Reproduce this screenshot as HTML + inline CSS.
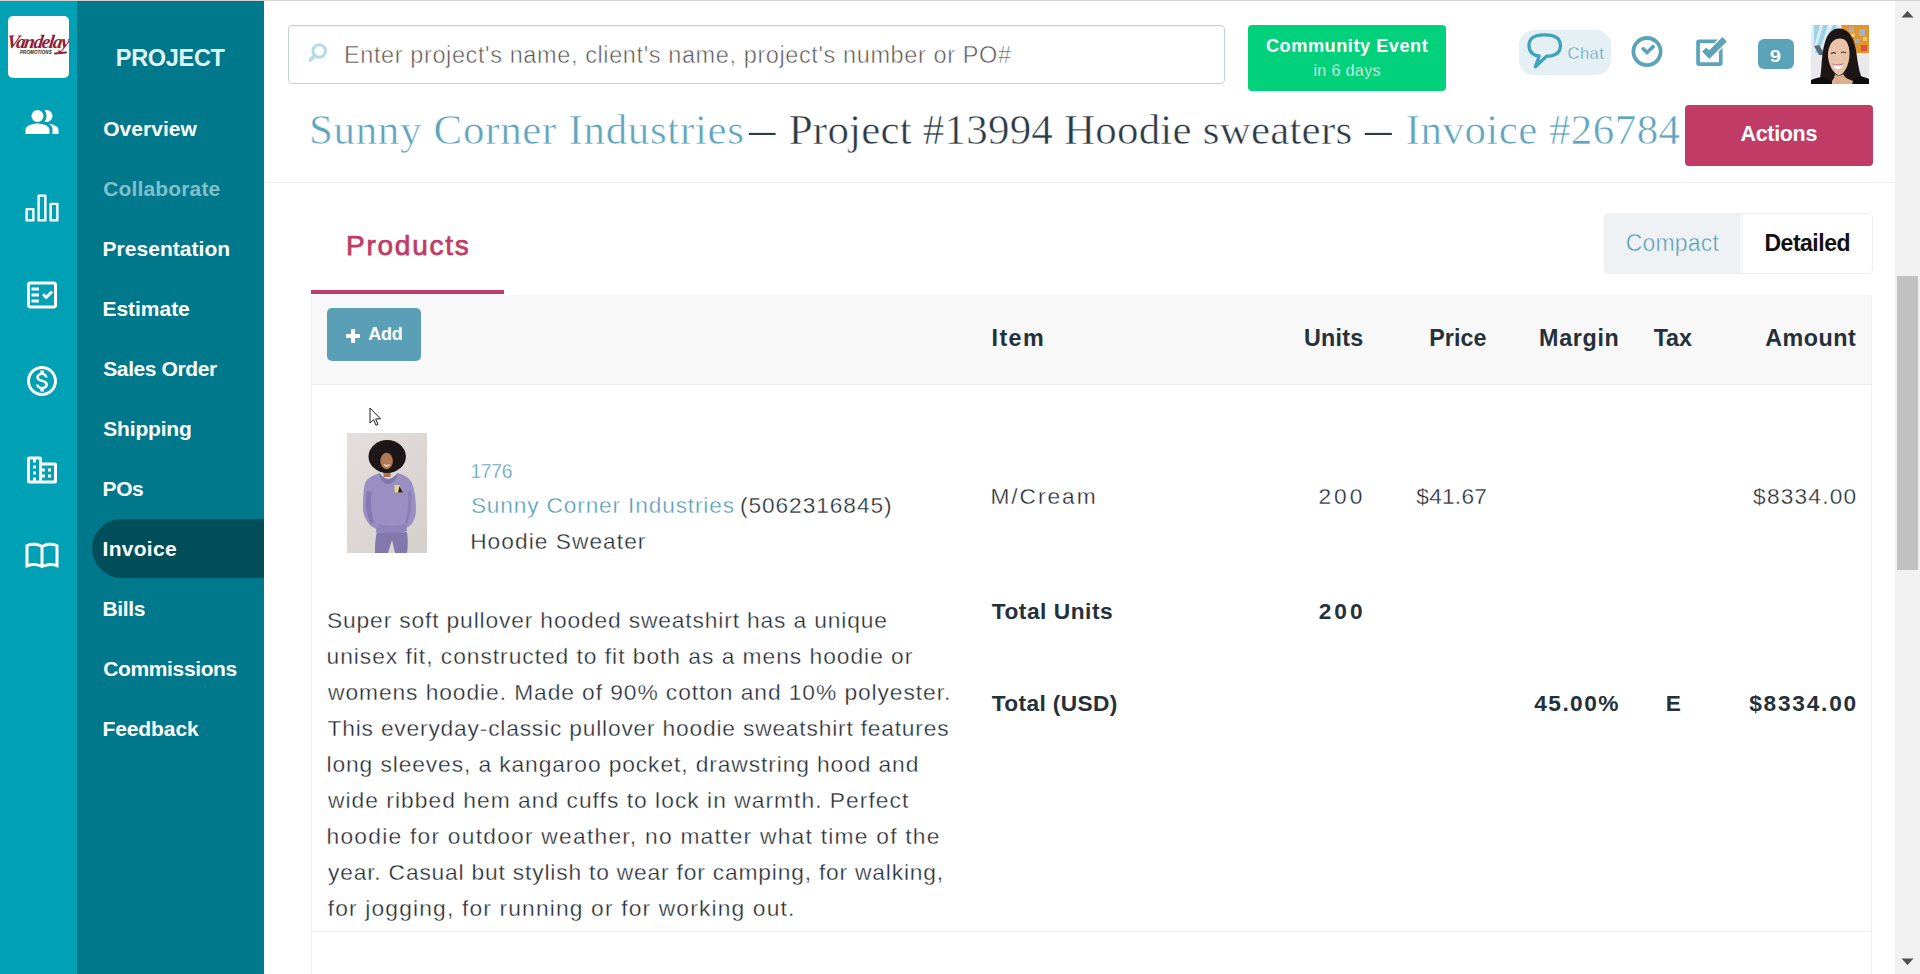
<!DOCTYPE html>
<html lang="en">
<head>
<meta charset="utf-8">
<title>Invoice #26784 - Project #13994 Hoodie sweaters</title>
<style>
*{box-sizing:border-box;margin:0;padding:0}
html,body{width:1920px;height:974px;overflow:hidden;background:#fff;font-family:"Liberation Sans",sans-serif;color:#24313b}
body{position:relative}
.abs{position:absolute}
.t{position:absolute;white-space:nowrap;text-decoration:none;display:block}
#topline{left:0;top:0;width:1920px;height:1px;background:#d6d2d2;z-index:50}
#iconbar{left:0;top:0;width:77px;height:974px;background:#00a0b5}
#side{left:77px;top:0;width:187px;height:974px;background:#00788b}
#logo{left:8px;top:16px;width:61px;height:62px;background:#fff;border-radius:5px;overflow:hidden}
.active{left:92px;top:519px;width:172px;height:59px;background:#004e5a;border-radius:30px 0 0 30px}
.ico{position:absolute;width:36px;height:36px;fill:#fff}
#search{left:288px;top:25px;width:937px;height:59px;border:1px solid #c5d1da;border-radius:4px;background:#fff;box-shadow:inset 0 1px 2px rgba(0,0,0,.06)}
#event{left:1248px;top:25px;width:198px;height:66px;background:#00d17a;border-radius:4px}
#chat{left:1519px;top:30px;width:92px;height:45px;background:#e5f0f5;border-radius:15px}
#badge{left:1758px;top:39px;width:36px;height:30px;background:#5ba3b9;border-radius:6px}
#hr{left:264px;top:182px;width:1631px;height:1px;background:#ebeef0}
#actions{left:1685px;top:105px;width:188px;height:61px;background:#c03b66;border-radius:4px}
#tabline{left:311px;top:290px;width:193px;height:4px;background:#c03b66}
#toggle{left:1604px;top:213px;width:269px;height:61px;border:1px solid #eceef0;border-radius:5px;background:#fff}
#compact{left:1604px;top:213px;width:137px;height:61px;background:#eef2f5;border-radius:5px 0 0 5px}
#thead{left:311px;top:295px;width:1561px;height:90px;background:#f8f8f8;border-bottom:1px solid #e9ecee;border-left:1px solid #eef0f1;border-right:1px solid #eef0f1}
#tbody{left:311px;top:385px;width:1561px;height:547px;border-left:1px solid #eef0f1;border-right:1px solid #eef0f1;border-bottom:1px solid #eceeef}
#tbody2{left:311px;top:932px;width:1561px;height:42px;border-left:1px solid #eef0f1;border-right:1px solid #eef0f1}
#add{left:327px;top:308px;width:94px;height:53px;background:#5a9fb5;border-radius:5px}
#sbtrack{left:1895px;top:0;width:25px;height:974px;background:#f1f1f1}
#sbthumb{left:1897px;top:276px;width:21px;height:294px;background:#c1c1c1}
</style>
</head>
<body>
<div id="iconbar" class="abs"></div>
<div id="side" class="abs"></div>
<div class="abs active"></div>
<span class="t" style="left:115.80px;top:47.11px;font-size:23.5px;line-height:23.5px;letter-spacing:-0.308px;color:#e0f5fa;font-weight:bold;">PROJECT</span>
<a class="t" style="left:103.25px;top:118.22px;font-size:21px;line-height:21px;letter-spacing:0.036px;color:#fff;font-weight:bold;">Overview</a>
<a class="t" style="left:103.25px;top:178.22px;font-size:21px;line-height:21px;letter-spacing:0.150px;color:#80c0cc;font-weight:bold;">Collaborate</a>
<a class="t" style="left:102.50px;top:238.22px;font-size:21px;line-height:21px;letter-spacing:0.045px;color:#fff;font-weight:bold;">Presentation</a>
<a class="t" style="left:102.50px;top:298.22px;font-size:21px;line-height:21px;letter-spacing:-0.036px;color:#fff;font-weight:bold;">Estimate</a>
<a class="t" style="left:103.25px;top:358.22px;font-size:21px;line-height:21px;letter-spacing:-0.400px;color:#fff;font-weight:bold;">Sales Order</a>
<a class="t" style="left:103.25px;top:418.22px;font-size:21px;line-height:21px;letter-spacing:-0.179px;color:#fff;font-weight:bold;">Shipping</a>
<a class="t" style="left:102.50px;top:478.22px;font-size:21px;line-height:21px;letter-spacing:-0.375px;color:#fff;font-weight:bold;">POs</a>
<a class="t" style="left:102.50px;top:538.22px;font-size:21px;line-height:21px;letter-spacing:0.292px;color:#fff;font-weight:bold;">Invoice</a>
<a class="t" style="left:102.50px;top:598.22px;font-size:21px;line-height:21px;letter-spacing:-0.375px;color:#fff;font-weight:bold;">Bills</a>
<a class="t" style="left:103.25px;top:658.22px;font-size:21px;line-height:21px;letter-spacing:-0.370px;color:#fff;font-weight:bold;">Commissions</a>
<a class="t" style="left:102.50px;top:718.22px;font-size:21px;line-height:21px;letter-spacing:-0.107px;color:#fff;font-weight:bold;">Feedback</a>

<div id="logo" class="abs">
  <span class="abs" style="left:-1px;top:15.500px;width:61px;text-align:center;font-family:'Liberation Serif',serif;font-style:italic;font-weight:bold;font-size:19px;line-height:20px;letter-spacing:-1.3px;color:#8e2135;transform:skewX(-8deg)">Vandelay</span>
  <span class="abs" style="left:12px;top:34.300px;font-style:italic;font-weight:bold;font-size:4.5px;line-height:5px;letter-spacing:0.1px;color:#1a1a1a;white-space:nowrap">PROMOTIONS</span>
  <span class="abs" style="left:46px;top:35.500px;width:13px;height:2.2px;background:#8e2135;border-radius:2px;transform:rotate(-6deg)"></span>
</div>

<!-- icon bar icons -->
<svg class="ico" style="left:24px;top:104px" viewBox="0 0 24 24"><path d="M16.67 13.13C18.04 14.06 19 15.32 19 17v3h4v-3c0-2.18-3.57-3.47-6.33-3.87z"/><circle cx="9" cy="8" r="4"/><path d="M15 12c2.21 0 4-1.79 4-4s-1.79-4-4-4c-.47 0-.91.1-1.33.24C14.5 5.27 15 6.58 15 8s-.5 2.73-1.33 3.76c.42.14.86.24 1.33.24zM9 13c-2.67 0-8 1.34-8 4v3h16v-3c0-2.66-5.33-4-8-4z"/></svg>
<svg class="ico" style="left:24px;top:190px;fill:none;stroke:#fff;stroke-width:1.6;stroke-linejoin:round" viewBox="0 0 24 24"><rect x="1.75" y="12.75" width="4.5" height="7.5"/><rect x="9.75" y="3.75" width="4.5" height="16.5"/><rect x="17.75" y="9.25" width="4.5" height="11"/></svg>
<svg class="ico" style="left:24px;top:277px" viewBox="0 0 24 24"><path d="M20 3H4c-1.1 0-2 .9-2 2v14c0 1.1.9 2 2 2h16c1.1 0 2-.9 2-2V5c0-1.1-.9-2-2-2zm0 16H4V5h16v14z"/><path d="M19.41 10.42 17.99 9l-3.17 3.17-1.41-1.42L12 12.16 14.82 15z"/><path d="M5 7h5v2H5zM5 11h5v2H5zM5 15h5v2H5z"/></svg>
<svg class="ico" style="left:24px;top:363px" viewBox="0 0 24 24"><path d="M12 2C6.48 2 2 6.48 2 12s4.48 10 10 10 10-4.48 10-10S17.52 2 12 2zm0 18c-4.41 0-8-3.59-8-8s3.59-8 8-8 8 3.59 8 8-3.59 8-8 8zm.31-8.86c-1.77-.45-2.34-.94-2.34-1.67 0-.84.79-1.43 2.1-1.43 1.38 0 1.9.66 1.94 1.64h1.71c-.05-1.34-.87-2.57-2.49-2.97V5H10.9v1.69c-1.51.32-2.72 1.3-2.72 2.81 0 1.79 1.49 2.69 3.66 3.21 1.95.46 2.34 1.15 2.34 1.87 0 .53-.39 1.39-2.1 1.39-1.6 0-2.23-.72-2.32-1.64H8.04c.1 1.7 1.36 2.66 2.86 2.97V19h2.34v-1.67c1.52-.29 2.72-1.16 2.73-2.77-.01-2.2-1.9-2.96-3.66-3.42z"/></svg>
<svg class="ico" style="left:24px;top:451.500px" viewBox="0 0 24 24"><path fill-rule="evenodd" d="M3.500 3h7A1.500 1.500 0 0 1 12 4.500V7h8.500A1.500 1.500 0 0 1 22 8.500v11a1.500 1.500 0 0 1-1.500 1.500h-17A1.500 1.500 0 0 1 2 19.500v-15A1.500 1.500 0 0 1 3.500 3zM4 5v14h6V5zM12 9v10h8V9zM6 5h2v2H6zM6 9h2v2H6zM6 13h2v2H6zM6 17h2v2H6zM12 11h2v2h-2zM12 15h2v2h-2zM16 11h2v2h-2zM16 15h2v2h-2z"/></svg>
<svg class="ico" style="left:24px;top:536px" viewBox="0 0 24 24"><path d="M21 5c-1.11-.35-2.33-.5-3.5-.5-1.95 0-4.050.4-5.500 1.500-1.450-1.100-3.550-1.500-5.500-1.500S2.450 4.900 1 6v14.650c0 .25.250.5.5.5.100 0 .150-.050.250-.050C3.100 20.450 5.050 20 6.500 20c1.950 0 4.050.4 5.500 1.500 1.350-.85 3.800-1.500 5.500-1.500 1.650 0 3.350.3 4.750 1.050.1.050.150.050.250.050.250 0 .5-.250.5-.5V6c-.6-.45-1.250-.75-2-1zM3 18.500V7c1.100-.35 2.300-.5 3.500-.5 1.340 0 3.130.41 4.500.99v11.500C9.630 18.410 7.840 18 6.500 18c-1.200 0-2.400.15-3.500.5zm18 0c-1.100-.35-2.300-.5-3.500-.5-1.340 0-3.130.41-4.500.99V7.490c1.370-.59 3.160-.99 4.500-.99 1.200 0 2.400.15 3.500.5v11.500z"/></svg>

<!-- top bar -->
<div id="search" class="abs"></div>
<svg class="abs" style="left:306px;top:42px" width="22" height="22" viewBox="0 0 22 22" fill="none" stroke="#b3dbe9" stroke-linecap="round"><circle cx="13.200" cy="9" r="6.300" stroke-width="3"/><path d="M8.800 13.500 4.300 18" stroke-width="3.800"/></svg>
<div id="event" class="abs"></div>
<div id="chat" class="abs"></div>
<svg class="abs" style="left:1522px;top:30px" width="46" height="42" viewBox="0 0 46 42" fill="none" stroke="#3fa3b9" stroke-width="3.3" stroke-linejoin="round" stroke-linecap="round"><path d="M17.200 26C12.500 26 7 22.800 7 15.500C7 8.200 12 4.800 22.700 4.800C33.400 4.800 38.400 8.200 38.400 15.500C38.400 22.800 33.400 26.200 24.500 26.200L13.400 36.700z"/></svg>
<svg class="abs" style="left:1629px;top:34px" width="36" height="36" viewBox="0 0 36 36" fill="none" stroke="#5ba3b9"><circle cx="18" cy="17.600" r="13.600" stroke-width="3.800"/><path d="M13.200 13.700 18 18.500 25.200 11.700" stroke-width="3.700"/></svg>
<svg class="abs" style="left:1692px;top:34px" width="40" height="36" viewBox="0 0 40 36"><rect x="6.050" y="7.450" width="22.700" height="22.600" rx="0.900" fill="none" stroke="#5ba3b9" stroke-width="3.700"/><path d="M10.100 17.500 14.200 13.800 17.300 16.300 30.400 3.100 34.700 7.400 17.300 24.900z" fill="#5ba3b9" stroke="#fff" stroke-width="3" paint-order="stroke"/></svg>
<div id="badge" class="abs"></div>
<!-- avatar -->
<svg class="abs" style="left:1811px;top:25px" width="58" height="59" viewBox="0 0 58 59">
  <defs><filter id="abl" x="-10%" y="-10%" width="120%" height="120%"><feGaussianBlur stdDeviation="0.7"/></filter>
  <clipPath id="acl"><rect width="58" height="59"/></clipPath></defs>
  <g clip-path="url(#acl)">
  <rect width="58" height="59" fill="#e9e9eb"/>
  <g filter="url(#abl)">
  <rect x="-2" y="-2" width="34" height="33" fill="#dfeef5"/>
  <path d="M3 0l6 0-6 22zM12 0h5l-9 28H4zM22 0h4L14 30h-5z" fill="#9fd0e6"/>
  <path d="M3 21l5-1 6 10H8z" fill="#5d6b75"/>
  <path d="M30 -2h30v30H34z" fill="#e0952f"/>
  <path d="M38 2h5v5h-5zM48 4h6v7h-6zM44 14h5v4h-5z" fill="#9fb3c8"/>
  <path d="M50 20h6v6h-6z" fill="#e2503a"/>
  <path d="M40 8h4v4h-4zM52 12h4v4h-4z" fill="#efc46a"/>
  <path d="M27 3.500c-6 .5-10 5-12.500 12C12 23 11 32 10.500 40 10 48 9 54 8 60h46c-1.500-4-4-8-5.500-14C46.500 38 46 30 44.500 23 43 14 38 3 27 3.500z" fill="#1b1214"/>
  <path d="M21 17c4-4 9-4.500 13-2 3 2.500 4.500 8 4.500 14 0 8-3 16-7.500 20-2 1.500-4 1.500-6 0-4-3.500-7.500-10-8-18-.3-5 1-10 4-14z" fill="#e9c2aa"/>
  <path d="M24 49c2 2 6 2 8 0l3 4 7 3v4H21v-4l2-3z" fill="#dcae8f"/>
  <path d="M21.500 39c3 1.800 7.500 1.800 11-0.300-1 3.500-3.300 5.300-5.800 5.300s-4.200-1.800-5.200-5z" fill="#fff"/>
  <path d="M21 38.500c3.500 1.500 8 1.300 11.800-.5l-.5 1.200c-3.300 1.500-7.500 1.700-10.800.3z" fill="#d9607a"/>
  <path d="M20 28.500c1.500-1 3.500-1 4.800 0M30 28c1.500-1.200 3.500-1.200 5 0" stroke="#4a3530" stroke-width="1.200" fill="none"/>
  <path d="M0 60v-5c3-1.500 7-2.500 11-3l9 4 1 4zM58 60v-6c-3-1.500-6-2.500-10-3l-6 5-1 4z" fill="#0c0c0e"/>
  </g></g>
</svg>

<span class="t" style="left:344.00px;top:43.81px;font-size:23.5px;line-height:23.5px;letter-spacing:0.606px;color:#5a5654;-webkit-text-stroke:0.5px #fff;">Enter project's name, client's name, project's number or PO#</span>
<span class="t" style="left:1265.95px;top:37.29px;font-size:18.2px;line-height:18.2px;letter-spacing:0.518px;color:#fff;font-weight:bold;">Community Event</span>
<span class="t" style="left:1313.40px;top:61.80px;font-size:16.3px;line-height:16.3px;letter-spacing:0.269px;color:#fff;-webkit-text-stroke:0.35px #00d17a;">in 6 days</span>
<span class="t" style="left:1567.55px;top:44.78px;font-size:16.5px;line-height:16.5px;letter-spacing:0.483px;color:#4f9db8;-webkit-text-stroke:0.4px #e5f0f5;">Chat</span>
<span class="t" style="left:1770.10px;top:47.90px;font-size:16.3px;line-height:16.3px;letter-spacing:0.000px;color:#fff;font-weight:bold;transform:scaleX(1.275);transform-origin:0.50px 50%;">9</span>

<!-- page header -->
<div id="hr" class="abs"></div>
<div id="actions" class="abs"></div>
<a class="t" style="left:308.95px;top:108.49px;font-size:43px;line-height:43px;letter-spacing:0.670px;color:#5fa5be;font-family:'Liberation Serif',serif;-webkit-text-stroke:0.55px #fff;">Sunny Corner Industries</a>
<span class="t" style="left:748.55px;top:108.49px;font-size:43px;line-height:43px;letter-spacing:0.000px;color:#2b3a45;font-family:'Liberation Serif',serif;transform:scaleX(0.614);transform-origin:-0.25px 50%;">—</span>
<span class="t" style="left:788.75px;top:108.49px;font-size:43px;line-height:43px;letter-spacing:0.197px;color:#2b3a45;font-family:'Liberation Serif',serif;-webkit-text-stroke:0.55px #fff;">Project #13994 Hoodie sweaters</span>
<span class="t" style="left:1365.25px;top:108.49px;font-size:43px;line-height:43px;letter-spacing:0.000px;color:#2b3a45;font-family:'Liberation Serif',serif;transform:scaleX(0.621);transform-origin:-0.25px 50%;">—</span>
<a class="t" style="left:1405.80px;top:108.49px;font-size:43px;line-height:43px;letter-spacing:0.431px;color:#5fa5be;font-family:'Liberation Serif',serif;-webkit-text-stroke:0.55px #fff;">Invoice #26784</a>
<span class="t" style="left:1740.50px;top:123.50px;font-size:21.5px;line-height:21.5px;letter-spacing:-0.333px;color:#fff;font-weight:bold;">Actions</span>

<!-- tabs -->
<div id="tabline" class="abs"></div>
<div id="toggle" class="abs"></div>
<div id="compact" class="abs"></div>
<div class="abs" style="left:1742px;top:214px;width:1px;height:59px;background:#eceef0"></div>

<!-- table -->
<div id="thead" class="abs"></div>
<div id="tbody" class="abs"></div>
<div id="tbody2" class="abs"></div>
<div id="add" class="abs"></div>
<svg class="abs" style="left:346px;top:328.500px" width="14" height="14" viewBox="0 0 14 14"><path d="M5 0h4v5h5v4H9v5H5V9H0V5h5z" fill="#fff"/></svg>

<!-- product image -->
<svg class="abs" style="left:347px;top:433px" width="80" height="120" viewBox="0 0 80 120">
  <defs><linearGradient id="pbg" x1="0" y1="0" x2="1" y2="1"><stop offset="0" stop-color="#e4dfdc"/><stop offset="1" stop-color="#d6d0cd"/></linearGradient>
  <filter id="pbl" x="-10%" y="-10%" width="120%" height="120%"><feGaussianBlur stdDeviation="0.6"/></filter></defs>
  <rect width="80" height="120" fill="url(#pbg)"/>
  <g filter="url(#pbl)">
  <path d="M30 99c-2 7-2 14-2 21h13l4-13 3 13h12c1-7 1-14 0-21z" fill="#8278ac"/>
  <path d="M33 40c-6 2-12 4-15 10-2 8-2 18-2 28 1 6 4 11 8 15l5 3v4h29v-4l6-4c3-4 5-9 5-14 0-10-1-20-4-28-3-6-8-8-14-10-2 4-5 6-9 6s-7-2-9-6z" fill="#9a8fc3"/>
  <path d="M20 58c-2 10-2 22 4 33l3-2c-3-10-4-20-2-30z" fill="#8579b3"/>
  <path d="M64 58c1 10 1 22-4 33l-2-2c3-10 4-20 3-30z" fill="#8a7fb8"/>
  <path d="M31 90c6 4 22 4 28 0l1 8c-8 3-22 3-30 0z" fill="#8e83ba"/>
  <path d="M32 40c3 3 6 6 9 6s7-3 10-6c-1 6-5 11-10 11s-8-5-9-11z" fill="#8276ae"/>
  <rect x="36.500" y="34" width="7" height="10" fill="#a97350"/>
  <ellipse cx="40.200" cy="23.500" rx="18.700" ry="16.400" fill="#1b1313"/>
  <ellipse cx="39.600" cy="28" rx="6.300" ry="8.300" fill="#b07a56"/>
  <path d="M36.300 30.800c2 1.500 4.800 1.500 6.800 0-.8 2-2 2.800-3.400 2.800s-2.600-.8-3.400-2.800z" fill="#f1e4dc"/>
  <path d="M47.500 52h5l3.500 7.500h-8.500z" fill="#e6d38c"/>
  <path d="M52.500 53l3.500 6.500h-5z" fill="#25201c"/>
  </g>
</svg>
<!-- mouse cursor -->
<svg class="abs" style="left:369px;top:407px" width="14" height="20" viewBox="0 0 14 20"><path d="M1 1v15l3.600-3.300 2.400 5.600 2-.9-2.400-5.500H11.500z" fill="#fff" stroke="#222" stroke-width="1"/></svg>

<span class="t" style="left:346.05px;top:231.70px;font-size:28px;line-height:28px;letter-spacing:1.736px;color:#c03b66;-webkit-text-stroke:0.75px #c03b66;">Products</span>
<span class="t" style="left:1625.75px;top:232.03px;font-size:23px;line-height:23px;letter-spacing:0.167px;color:#4f98b4;-webkit-text-stroke:0.5px #eef2f5;">Compact</span>
<span class="t" style="left:1764.50px;top:232.03px;font-size:23px;line-height:23px;letter-spacing:-0.500px;color:#111;font-weight:bold;">Detailed</span>
<span class="t" style="left:368.25px;top:324.76px;font-size:18px;line-height:18px;letter-spacing:-0.250px;color:#fff;font-weight:bold;">Add</span>
<span class="t" style="left:991.60px;top:326.58px;font-size:23.3px;line-height:23.3px;letter-spacing:1.367px;color:#24313b;font-weight:bold;">Item</span>
<span class="t" style="left:1303.95px;top:326.58px;font-size:23.3px;line-height:23.3px;letter-spacing:0.275px;color:#24313b;font-weight:bold;">Units</span>
<span class="t" style="left:1429.30px;top:326.58px;font-size:23.3px;line-height:23.3px;letter-spacing:0.038px;color:#24313b;font-weight:bold;">Price</span>
<span class="t" style="left:1539.10px;top:326.58px;font-size:23.3px;line-height:23.3px;letter-spacing:0.660px;color:#24313b;font-weight:bold;">Margin</span>
<span class="t" style="left:1653.65px;top:326.58px;font-size:23.3px;line-height:23.3px;letter-spacing:-0.100px;color:#24313b;font-weight:bold;">Tax</span>
<span class="t" style="left:1765.25px;top:326.58px;font-size:23.3px;line-height:23.3px;letter-spacing:0.480px;color:#24313b;font-weight:bold;">Amount</span>
<a class="t" style="left:470.40px;top:461.66px;font-size:19.3px;line-height:19.3px;letter-spacing:-0.267px;color:#4f9ab5;-webkit-text-stroke:0.35px #fff;">1776</a>
<a class="t" style="left:470.90px;top:493.78px;font-size:22.7px;line-height:22.7px;letter-spacing:0.841px;color:#4f9ab5;-webkit-text-stroke:0.4px #fff;">Sunny Corner Industries</a>
<span class="t" style="left:739.90px;top:493.78px;font-size:22.7px;line-height:22.7px;letter-spacing:0.945px;color:#1d2831;-webkit-text-stroke:0.35px #fff;">(5062316845)</span>
<span class="t" style="left:470.15px;top:530.48px;font-size:22.7px;line-height:22.7px;letter-spacing:1.062px;color:#1d2831;-webkit-text-stroke:0.35px #fff;">Hoodie Sweater</span>
<span class="t" style="left:327.00px;top:608.60px;font-size:22.8px;line-height:22.8px;letter-spacing:0.848px;color:#1d2831;-webkit-text-stroke:0.35px #fff;">Super soft pullover hooded sweatshirt has a unique</span>
<span class="t" style="left:326.50px;top:644.60px;font-size:22.8px;line-height:22.8px;letter-spacing:0.969px;color:#1d2831;-webkit-text-stroke:0.35px #fff;">unisex fit, constructed to fit both as a mens hoodie or</span>
<span class="t" style="left:328.00px;top:680.60px;font-size:22.8px;line-height:22.8px;letter-spacing:0.919px;color:#1d2831;-webkit-text-stroke:0.35px #fff;">womens hoodie. Made of 90% cotton and 10% polyester.</span>
<span class="t" style="left:327.50px;top:716.60px;font-size:22.8px;line-height:22.8px;letter-spacing:0.796px;color:#1d2831;-webkit-text-stroke:0.35px #fff;">This everyday-classic pullover hoodie sweatshirt features</span>
<span class="t" style="left:326.50px;top:752.60px;font-size:22.8px;line-height:22.8px;letter-spacing:0.895px;color:#1d2831;-webkit-text-stroke:0.35px #fff;">long sleeves, a kangaroo pocket, drawstring hood and</span>
<span class="t" style="left:328.00px;top:788.60px;font-size:22.8px;line-height:22.8px;letter-spacing:1.025px;color:#1d2831;-webkit-text-stroke:0.35px #fff;">wide ribbed hem and cuffs to lock in warmth. Perfect</span>
<span class="t" style="left:326.50px;top:824.60px;font-size:22.8px;line-height:22.8px;letter-spacing:1.236px;color:#1d2831;-webkit-text-stroke:0.35px #fff;">hoodie for outdoor weather, no matter what time of the</span>
<span class="t" style="left:328.00px;top:860.60px;font-size:22.8px;line-height:22.8px;letter-spacing:0.811px;color:#1d2831;-webkit-text-stroke:0.35px #fff;">year. Casual but stylish to wear for camping, for walking,</span>
<span class="t" style="left:327.75px;top:896.60px;font-size:22.8px;line-height:22.8px;letter-spacing:1.156px;color:#1d2831;-webkit-text-stroke:0.35px #fff;">for jogging, for running or for working out.</span>
<span class="t" style="left:990.45px;top:485.48px;font-size:22.7px;line-height:22.7px;letter-spacing:1.975px;color:#1d2831;-webkit-text-stroke:0.35px #fff;">M/Cream</span>
<span class="t" style="left:1318.40px;top:485.48px;font-size:22.7px;line-height:22.7px;letter-spacing:3.000px;color:#1d2831;-webkit-text-stroke:0.35px #fff;">200</span>
<span class="t" style="left:1416.35px;top:485.48px;font-size:22.7px;line-height:22.7px;letter-spacing:0.220px;color:#1d2831;-webkit-text-stroke:0.35px #fff;">$41.67</span>
<span class="t" style="left:1753.05px;top:485.48px;font-size:22.7px;line-height:22.7px;letter-spacing:1.214px;color:#1d2831;-webkit-text-stroke:0.35px #fff;">$8334.00</span>
<span class="t" style="left:991.75px;top:600.28px;font-size:22.7px;line-height:22.7px;letter-spacing:0.540px;color:#24313b;font-weight:bold;">Total Units</span>
<span class="t" style="left:1318.65px;top:600.28px;font-size:22.7px;line-height:22.7px;letter-spacing:3.025px;color:#24313b;font-weight:bold;">200</span>
<span class="t" style="left:991.75px;top:692.38px;font-size:22.7px;line-height:22.7px;letter-spacing:0.370px;color:#24313b;font-weight:bold;">Total (USD)</span>
<span class="t" style="left:1534.35px;top:692.38px;font-size:22.7px;line-height:22.7px;letter-spacing:1.410px;color:#24313b;font-weight:bold;">45.00%</span>
<span class="t" style="left:1665.70px;top:692.38px;font-size:22.7px;line-height:22.7px;letter-spacing:0.000px;color:#24313b;font-weight:bold;">E</span>
<span class="t" style="left:1749.25px;top:692.38px;font-size:22.7px;line-height:22.7px;letter-spacing:1.757px;color:#24313b;font-weight:bold;">$8334.00</span>

<!-- scrollbar -->
<div id="sbtrack" class="abs"></div>
<div id="sbthumb" class="abs"></div>
<svg class="abs" style="left:1901px;top:10px" width="13" height="8" viewBox="0 0 13 8"><path d="M0.500 7.500h12L6.500 1z" fill="#505050"/></svg>
<svg class="abs" style="left:1901px;top:958px" width="13" height="8" viewBox="0 0 13 8"><path d="M0.500 0.500h12L6.500 7z" fill="#505050"/></svg>
<div id="topline" class="abs"></div>
</body>
</html>
